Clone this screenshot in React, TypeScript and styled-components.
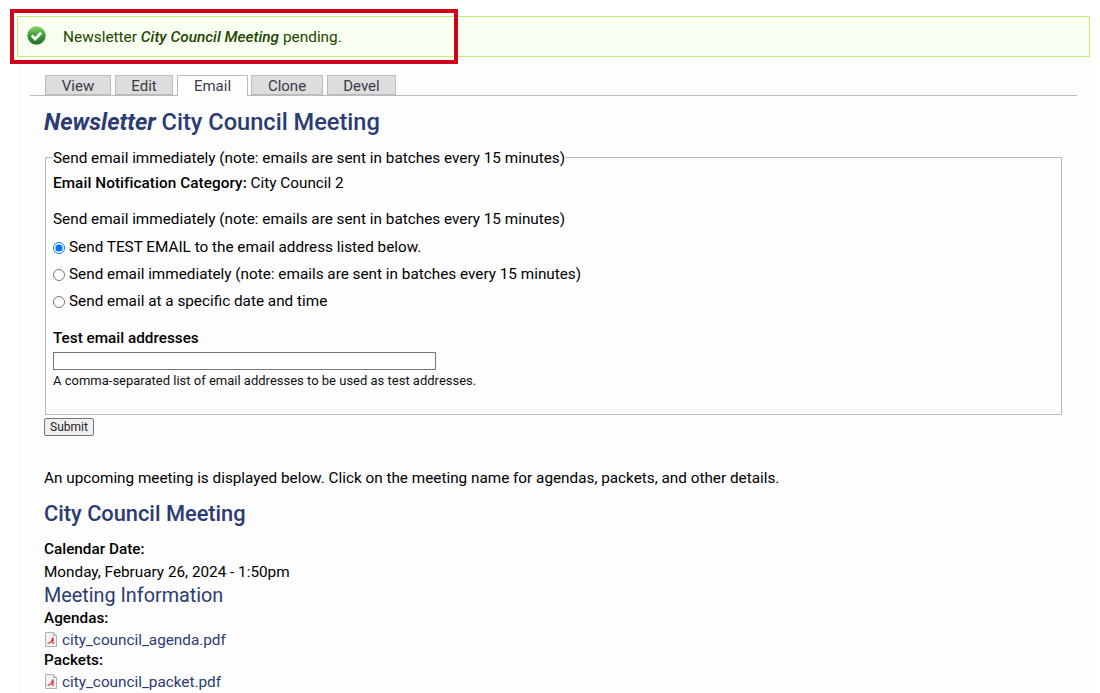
import styled, { createGlobalStyle } from "styled-components";

const GlobalStyle = createGlobalStyle`
  html, body {
    margin: 0;
    padding: 0;
    background: #ffffff;
  }
  body {
    font-family: Roboto, "Liberation Sans", sans-serif;
    font-size: 15.3px;
    color: #000;
    overflow: hidden;
  }
`;

const Page = styled.div`
  position: relative;
  height: 693px;
  overflow: hidden;
  padding: 16px 10px 0 17px;
  box-sizing: border-box;
`;

const Highlight = styled.div`
  position: absolute;
  left: 10px;
  top: 9px;
  width: 448px;
  height: 55px;
  border: 4px solid #d0021b;
  box-sizing: border-box;
  pointer-events: none;
`;

const Message = styled.div`
  display: flex;
  align-items: center;
  height: 41px;
  box-sizing: border-box;
  border: 1px solid #bbee77;
  background: #f8fff0;
  color: #234600;
  padding: 0 0 0 9px;
  svg {
    margin-bottom: 3px;
  }
`;

const MessageText = styled.div`
  margin-left: 17px;
  font-size: 15.4px;
  em {
    font-weight: 500;
  }
`;

const Main = styled.div`
  padding: 18px 13px 0 13px;
  background: #fdfdfd;
  height: 636px;
  box-sizing: border-box;
`;

const Tabs = styled.ul`
  display: flex;
  list-style: none;
  margin: 0;
  padding: 0 0 0 15px;
  gap: 4px;
  height: 20px;
  border-bottom: 1px solid #bbbbbb;
`;

const Tab = styled.li<{ $active?: boolean; $width: number }>`
  box-sizing: border-box;
  width: ${(p) => p.$width}px;
  height: ${(p) => (p.$active ? "21px" : "20px")};
  margin-right: ${(p) => (p.$active ? "-1px" : "0")};
  border: 1px solid #bbbbbb;
  border-bottom: ${(p) => (p.$active ? "none" : "1px solid #bbbbbb")};
  background: ${(p) => (p.$active ? "#ffffff" : "#dddddd")};
  color: #3a3a4a;
  font-size: 15px;
  line-height: 21px;
  text-align: center;
`;

const Content = styled.div`
  padding-left: 14px;
`;

const Title = styled.h1`
  margin: 12px 0 0;
  font-size: 23.6px;
  line-height: 28px;
  font-weight: 500;
  color: #2b3b73;
  em {
    font-weight: 700;
  }
`;

const Fieldset = styled.fieldset`
  margin: 11px 15px 0 1px;
  padding: 0 7px;
  height: 268px;
  box-sizing: border-box;
  border: 1px solid #bbbbbb;
  legend {
    padding: 2px 0 0;
    line-height: 18px;
  }
`;

const Line = styled.div`
  line-height: 18px;
  margin-top: 7px;
  b {
    font-weight: 500;
    letter-spacing: 0.07px;
  }
`;

const Prompt = styled.div`
  line-height: 18px;
  margin-top: 18px;
  margin-bottom: 10px;
`;

const RadioRow = styled.label`
  display: flex;
  align-items: center;
  height: 18px;
  margin-bottom: 9px;
  input {
    margin: 1px 4px 0 0;
    width: 12px;
    height: 12px;
  }
`;

const FieldLabel = styled.div`
  font-weight: 500;
  line-height: 18px;
  margin-top: 19px;
`;

const TextInput = styled.input`
  display: block;
  box-sizing: border-box;
  width: 383px;
  height: 18px;
  margin-top: 5px;
  border: 1px solid #767676;
  background: #fff;
`;

const Hint = styled.div`
  font-size: 13px;
  line-height: 14px;
  margin-top: 4px;
  color: #111;
`;

const SubmitButton = styled.button`
  display: block;
  box-sizing: border-box;
  height: 18px;
  width: 50px;
  margin: 3px 0 0;
  padding: 0;
  font-family: Roboto, "Liberation Sans", sans-serif;
  font-size: 12px;
  color: #222;
  background: #efefef;
  border: 1px solid #767676;
  border-radius: 2px;
`;

const Intro = styled.p`
  margin: 33px 0 0;
  line-height: 18px;
`;

const SubTitle = styled.h2`
  margin: 13px 0 0;
  font-size: 21.8px;
  line-height: 28px;
  font-weight: 500;
  color: #2b3b73;
`;

const Label = styled.div<{ $first?: boolean }>`
  font-weight: 500;
  line-height: 21px;
  margin-top: ${(p) => (p.$first ? "11px" : "0")};
`;

const Value = styled.div`
  line-height: 24px;
`;

const SectionTitle = styled.h3`
  margin: 0 0 1px;
  font-size: 19.8px;
  line-height: 23px;
  font-weight: 400;
  color: #2b3b73;
`;

const FileRow = styled.div`
  display: flex;
  align-items: center;
  line-height: 22px;
  height: 21px;
  color: #2b3b73;
  gap: 5px;
  padding-left: 1px;
`;

function CheckIcon() {
  return (
    <svg width="19" height="19" viewBox="0 0 19 19">
      <defs>
        <linearGradient id="okGrad" x1="0" y1="0" x2="0" y2="1">
          <stop offset="0" stopColor="#8fd06a" />
          <stop offset="0.5" stopColor="#3f9a3a" />
          <stop offset="1" stopColor="#1f6d2a" />
        </linearGradient>
      </defs>
      <circle cx="9.5" cy="9.5" r="9.2" fill="url(#okGrad)" />
      <path d="M4.8 9.6l3.3 3.3 6-6.2" fill="none" stroke="#fff" strokeWidth="2.8" />
    </svg>
  );
}

function PdfIcon() {
  return (
    <svg width="12" height="15" viewBox="0 0 12 15">
      <path d="M.5.5h8l3 3v11H.5z" fill="#f2f2f2" stroke="#b0b0b0" />
      <path d="M8.5.5v3h3" fill="#dcdcdc" stroke="#b0b0b0" />
      <path d="M2.5 11.5l3.5-1.5 2-4.5v6.5" fill="none" stroke="#e2323a" strokeWidth="1.3" />
    </svg>
  );
}

const note = "Send email immediately (note: emails are sent in batches every 15 minutes)";

export default function App() {
  return (
    <Page>
      <GlobalStyle />
      <Message>
        <CheckIcon />
        <MessageText>
          Newsletter <em>City Council Meeting</em> pending.
        </MessageText>
      </Message>
      <Highlight />
      <Main>
        <Tabs>
          <Tab $width={66}>View</Tab>
          <Tab $width={58}>Edit</Tab>
          <Tab $width={71} $active>Email</Tab>
          <Tab $width={72}>Clone</Tab>
          <Tab $width={69}>Devel</Tab>
        </Tabs>
        <Content>
          <Title>
            <em>Newsletter</em> City Council Meeting
          </Title>
          <Fieldset>
            <legend>{note}</legend>
            <Line>
              <b>Email Notification Category:</b> City Council 2
            </Line>
            <Prompt>{note}</Prompt>
            <RadioRow>
              <input type="radio" name="when" defaultChecked />
              Send TEST EMAIL to the email address listed below.
            </RadioRow>
            <RadioRow>
              <input type="radio" name="when" />
              {note}
            </RadioRow>
            <RadioRow>
              <input type="radio" name="when" />
              Send email at a specific date and time
            </RadioRow>
            <FieldLabel>Test email addresses</FieldLabel>
            <TextInput type="text" />
            <Hint>A comma-separated list of email addresses to be used as test addresses.</Hint>
          </Fieldset>
          <SubmitButton>Submit</SubmitButton>
          <Intro>An upcoming meeting is displayed below. Click on the meeting name for agendas, packets, and other details.</Intro>
          <SubTitle>City Council Meeting</SubTitle>
          <Label $first>Calendar Date:</Label>
          <Value>Monday, February 26, 2024 - 1:50pm</Value>
          <SectionTitle>Meeting Information</SectionTitle>
          <Label>Agendas:</Label>
          <FileRow>
            <PdfIcon />
            city_council_agenda.pdf
          </FileRow>
          <Label>Packets:</Label>
          <FileRow>
            <PdfIcon />
            city_council_packet.pdf
          </FileRow>
        </Content>
      </Main>
    </Page>
  );
}
